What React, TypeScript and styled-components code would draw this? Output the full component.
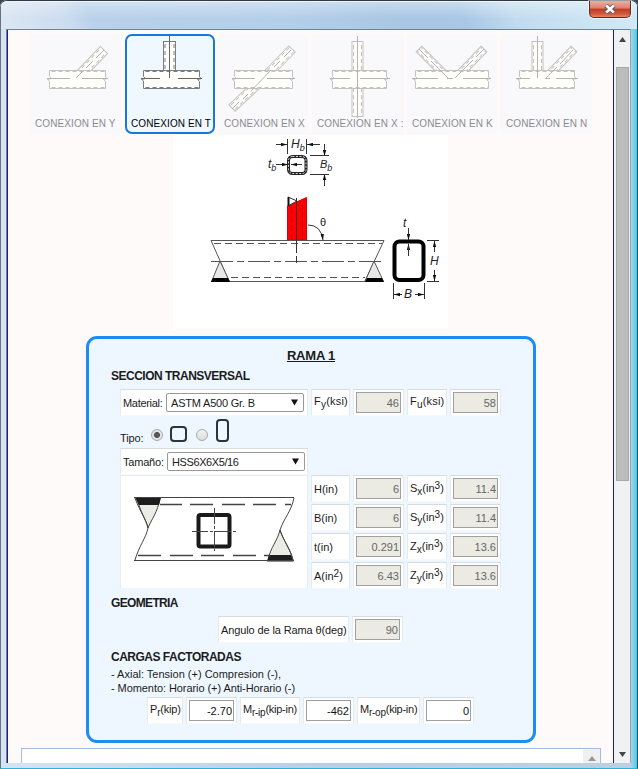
import React from "react";
import styled, { createGlobalStyle } from "styled-components";

const Global = createGlobalStyle`
  * { box-sizing: border-box; }
  body { margin: 0; overflow: hidden; font-family: "Liberation Sans", Arial, sans-serif; font-size: 11px; color: #1b1b1b; }
  svg { display: block; }
`;

const Window = styled.div`
  width: 638px;
  height: 769px;
  display: flex;
  flex-direction: column;
  border: 1px solid #4c5762;
  border-color: #2f3a44 #1d4f60 #2ab6d6 #66727c;
  border-radius: 7px 7px 0 0;
  background: linear-gradient(90deg, #d5e4f5 0, #b9cee8 50%, #bcd0e2 99%, #3fd0ec 100%);
  box-shadow: 0 0 0 8px #39454f;
`;

const TitleBar = styled.header`
  height: 28px;
  flex: none;
  display: flex;
  justify-content: flex-end;
  padding-right: 6px;
  border-radius: 6px 6px 0 0;
  border-top: 1px solid #eef6fc;
  background:
    linear-gradient(180deg, rgba(255,255,255,.35), rgba(255,255,255,0) 60%),
    linear-gradient(60deg, #dce7f4 0, #cbdcef 11%, #b9d1ea 15%, #b4cfea 45%, #a9c6e4 62%, #a9c8e6 72%, #c2dcef 80%, #d3ebf6 100%);
`;

const CloseButton = styled.button`
  width: 42px;
  height: 17px;
  margin-top: -1px;
  padding: 0;
  display: flex;
  align-items: center;
  justify-content: center;
  border: 1px solid #5b2a2a;
  border-top: 0;
  border-radius: 0 0 5px 5px;
  background: linear-gradient(180deg, #eab0a2 0, #dc8070 45%, #c03a22 50%, #d0583c 80%, #e08a68 100%);
  box-shadow: 0 0 0 1px rgba(255,255,255,.5);
`;

const Client = styled.div`
  height: 734px;
  flex: none;
  display: flex;
  margin: 0 6px 0 5px;
  border: 1px solid #6f8396;
  border-bottom: 0;
  border-right-color: #8fa6b8;
`;

const Page = styled.main`
  width: 607px;
  height: 733px;
  flex: none;
  overflow: hidden;
  display: flex;
  flex-direction: column;
  border-left: 1px solid #1c1c86;
  border-right: 1px solid #1c1c86;
  background: #fffafa;
`;

const ScrollTrack = styled.div`
  flex: 1;
  display: flex;
  flex-direction: column;
  align-items: center;
  justify-content: space-between;
  padding: 7px 0 6px;
  background: #f0f1f3;
`;

const Thumb = styled.div`
  width: 13px;
  height: 414px;
  margin: 25px 0 auto;
  background: #bcbcbc;
  border: 1px solid #a8a8a8;
`;

const Tabs = styled.nav`
  display: flex;
  height: 100px;
  flex: none;
  margin: 4px 0 0 22px;
  gap: 4px;
`;

const Tab = styled.div<{ $w: number; $active?: boolean }>`
  width: ${(p) => p.$w}px;
  height: 100px;
  flex: none;
  display: flex;
  flex-direction: column;
  overflow: hidden;
  border: ${(p) => (p.$active ? "2px solid #1478dc" : "0")};
  border-radius: ${(p) => (p.$active ? 7 : 0)}px;
  background: ${(p) => (p.$active ? "#f0f8ff" : "#f9f9fc")};
`;

const Caption = styled.span<{ $active?: boolean }>`
  font-size: 10px;
  line-height: 12px;
  letter-spacing: 0.1px;
  white-space: nowrap;
  padding-left: ${(p) => (p.$active ? 4 : 5)}px;
  padding-top: ${(p) => (p.$active ? 1 : 0)}px;
  color: ${(p) => (p.$active ? "#000" : "#8b8b8f")};
`;

const Figure = styled.div`
  width: 275px;
  height: 194px;
  flex: none;
  margin: 1px 0 0 165px;
  background: #fff;
`;

const Panel = styled.section`
  width: 450px;
  height: 407px;
  flex: none;
  margin: 7px 0 0 78px;
  border: 3px solid #1e8cf5;
  border-radius: 11px;
  background: #eef7ff;
  display: flex;
  flex-direction: column;
  padding: 9px 0 0 22px;
`;

const Title = styled.h1`
  margin: 0 0 0 -22px;
  width: 444px;
  text-align: center;
  font-size: 13px;
  line-height: 16px;
  letter-spacing: -0.2px;
  text-decoration: underline;
`;

const Heading = styled.h2<{ $top: number; $ls?: number }>`
  margin: ${(p) => p.$top}px 0 0;
  font-size: 12px;
  line-height: 14px;
  letter-spacing: ${(p) => p.$ls ?? -0.5}px;
`;

const Row = styled.div<{ $top?: number; $left?: number }>`
  display: flex;
  gap: 3px;
  margin: ${(p) => p.$top ?? 0}px 0 0 ${(p) => p.$left ?? 9}px;
`;

const Cell = styled.div<{ $w: number }>`
  width: ${(p) => p.$w}px;
  height: 27px;
  flex: none;
  display: flex;
  align-items: center;
  white-space: nowrap;
  padding-left: 2px;
  border: 1px solid #e6ebee;
  border-top-color: #d7dcdf;
  border-bottom-color: #f5f9fb;
  background: #fff;
`;

const Label = styled.span<{ $ls?: number; $lift?: number; $w?: number }>`
  line-height: 12px;
  width: ${(p) => (p.$w ? `${p.$w}px` : "auto")};
  letter-spacing: ${(p) => p.$ls ?? 0}px;
  padding-bottom: ${(p) => p.$lift ?? 0}px;
  sub, sup { font-size: 10px; line-height: 0; position: static; }
  sup { vertical-align: 3px; }
  sub { vertical-align: -3px; }
`;

const Field = styled.input<{ $editable?: boolean }>`
  width: 45px;
  height: 21px;
  margin: 0;
  padding: 1px 1px 0 0;
  text-align: right;
  font: 11px "Liberation Sans", Arial, sans-serif;
  border: 1px solid #a0a0a0;
  outline: none;
  background: ${(p) => (p.$editable ? "#fff" : "#ebebe4")};
  color: ${(p) => (p.$editable ? "#111" : "#666")};
`;

const Select = styled.div<{ $ls?: number }>`
  width: 138px;
  height: 19px;
  margin-left: 3px;
  padding: 0 5px 0 4px;
  display: flex;
  align-items: center;
  justify-content: space-between;
  letter-spacing: ${(p) => p.$ls ?? 0}px;
  border: 1px solid #999;
  border-radius: 2px;
  background: #fff;
`;

const TypeRow = styled.div`
  height: 32px;
  display: flex;
  align-items: flex-start;
  margin-left: 9px;
`;
const TypeLabel = styled.span`
  width: 31px;
  padding-top: 16px;
  line-height: 12px;
  letter-spacing: -0.1px;
`;
const Radio = styled.span<{ $on?: boolean }>`
  width: 12px;
  height: 12px;
  margin-top: 13px;
  border: 1px solid #a7a7a7;
  border-radius: 50%;
  background: ${(p) => (p.$on ? "radial-gradient(circle, #555 0 2.6px, #e4e4e4 3.4px)" : "linear-gradient(#f3f3f3, #dcdcdc)")};
`;
const Shape = styled.span<{ $w: number; $h: number; $top: number; $left: number; $right?: number }>`
  width: ${(p) => p.$w}px;
  height: ${(p) => p.$h}px;
  margin: ${(p) => p.$top}px ${(p) => p.$right ?? 0}px 0 ${(p) => p.$left}px;
  border: 2px solid #2c333c;
  border-radius: 4px;
`;

const Section = styled.div`
  display: grid;
  grid-template-columns: 188px 1fr;
  column-gap: 3px;
  margin: 0 0 0 9px;
`;
const SectionArt = styled.div`
  height: 113px;
  background: #fff;
  border: 1px solid #e9eef0;
  border-bottom: 0;
`;
const Values = styled.div`
  display: flex;
  flex-direction: column;
  gap: 2px;
`;
const Note = styled.p<{ $ls?: number }>`
  margin: 0;
  line-height: 14px;
  letter-spacing: ${(p) => p.$ls ?? 0}px;
  position: static;
  &:first-of-type { padding-top: 3px; line-height: 14px; }
`;

const Bottom = styled.div`
  width: 580px;
  height: 30px;
  flex: none;
  margin: 5px 0 0 13px;
  display: flex;
  justify-content: flex-end;
  border: 1px solid #a6bde3;
  background: #fff;
`;
const MiniScroll = styled.div`
  width: 17px;
  background: #f0f0f0;
  padding: 7px 0 0 5px;
`;

type TubeProps = { x1: number; y1: number; x2: number; y2: number; w: number };

const Tube = ({ x1, y1, x2, y2, w }: TubeProps) => {
  const len = Math.hypot(x2 - x1, y2 - y1);
  const a = (Math.atan2(y2 - y1, x2 - x1) * 180) / Math.PI;
  const h = w / 2;
  return (
    <g transform={`translate(${x1} ${y1}) rotate(${a})`}>
      <rect x={0} y={-h} width={len} height={w} fill="#fffefb" strokeWidth={1} />
      <path d={`M2 ${-h + 1.5}H${len}M2 ${h - 1.5}H${len}`} strokeDasharray="4 3" strokeWidth={1} fill="none" />
    </g>
  );
};

const Chord = ({ x1, x2 }: { x1: number; x2: number }) => (
  <g fill="none">
    <path
      d={`M${x1} 70.5H${x2}V77l2 1.5-4 1 2 2V88.5H${x1}V81l-2-1.5 4-1-2-2Z`}
      fill="#fffefb"
    />
    <path d={`M${x1 + 2} 71.500H${x2}M${x1 + 2} 87.500H${x2}`} strokeDasharray="4 3" />
  </g>
);

type Joint = {
  name: string; x: number; w: number; chord: [number, number];
  branches: TubeProps[]; axes: string; active?: boolean;
};

const joints: Joint[] = [
  { name: "CONEXION EN Y", x: 30, w: 91, chord: [49.5, 105.5],
    branches: [{ x1: 78, y1: 77, x2: 104, y2: 50, w: 10 }], axes: "M76 78L83 71M86 68L93 61M96 58L104 50M47 78.5H70M82 78.5H108" },
  { name: "CONEXION EN T", x: 125, w: 90, chord: [143.5, 199.5], active: true,
    branches: [{ x1: 169.5, y1: 78, x2: 169.5, y2: 41.5, w: 12 }], axes: "M169.5 36V78M141 78.5H160M178 78.5H202" },
  { name: "CONEXION EN X", x: 219, w: 89, chord: [234.5, 292.5],
    branches: [{ x1: 263, y1: 79, x2: 292, y2: 49, w: 9 }, { x1: 263, y1: 79, x2: 232, y2: 108, w: 9 }],
    axes: "M284 57L291 50M280 61L274 67M271 70L251 91M248 94L243 99M239 102L232 109M232 78.5H255M267 78.5H295" },
  { name: "CONEXION EN X :", x: 312, w: 91, chord: [332.5, 386.5],
    branches: [{ x1: 357.5, y1: 79, x2: 357.5, y2: 41.5, w: 11 }, { x1: 357.5, y1: 79, x2: 357.5, y2: 116.5, w: 11 }],
    axes: "M357.5 36V118M330 78.5H350M360 78.5H390" },
  { name: "CONEXION EN K", x: 407, w: 90, chord: [415.5, 488.5],
    branches: [{ x1: 447, y1: 77, x2: 419, y2: 49, w: 8 }, { x1: 457, y1: 77, x2: 484, y2: 49, w: 8 }],
    axes: "M448 78L431 61M428 58L419 49M455 78L473 60M476 57L484 49M412 78.5H438M447 78.5H453M463 78.5H491" },
  { name: "CONEXION EN N", x: 501, w: 91, chord: [519.5, 574.5],
    branches: [{ x1: 537.5, y1: 79, x2: 537.5, y2: 41.5, w: 11 }, { x1: 547, y1: 77, x2: 574, y2: 49, w: 8 }],
    axes: "M537.5 36V78M545 79L557 67M560 64L573 50M516 78.5H530M545 78.5H550M556 78.5H578" },
];

const JointTab = ({ j }: { j: Joint }) => {
  const inset = j.active ? 2 : 0;
  const h = j.active ? 81 : 84;
  return (
    <Tab $w={j.w} $active={j.active}>
      <svg width={j.w - inset * 2} height={h} viewBox={`${j.x + inset} ${34 + inset} ${j.w - inset * 2} ${h}`} stroke={j.active ? "#7c7c7c" : "#c2c2c0"} fill="none">
        {j.branches.map((b, i) => <Tube key={i} {...b} />)}
        <Chord x1={j.chord[0]} x2={j.chord[1]} />
        <path d={j.axes} stroke={j.active ? "#666" : "#b4b4b4"} />
      </svg>
      <Caption $active={j.active}>{j.name}</Caption>
    </Tab>
  );
};

const JointDiagram = () => (
  <svg width="275" height="194" viewBox="173 135 275 194" fill="none" stroke="#333" strokeWidth="1">
    <defs>
      <marker id="arrow" markerWidth="6" markerHeight="4" refX="6" refY="2" orient="auto" markerUnits="userSpaceOnUse">
        <path d="M0 0.300L6 2L0 3.700Z" fill="#111" stroke="none" />
      </marker>
    </defs>
    <g markerEnd="url(#arrow)">
      <path d="M276 144.5H287" /><path d="M320 144.5H307" />
      <path d="M276 164.5H288" /><path d="M302 164.5H291" />
      <path d="M324.500 144V156" /><path d="M324.500 186V174" />
      <path d="M408.500 228V240" /><path d="M408.500 256V244" />
      <path d="M434.500 252V241" /><path d="M434.500 270V281" />
      <path d="M402 294.500H394" /><path d="M415 294.500H424" />
      <path d="M308 225Q321 225 323 240" />
    </g>
    <path d="M287.500 139V154M306.500 139V154M310 155.500H329M310 174.500H329M427 240.500H439M427 281.500H439M393.500 283V299M424.500 283V299" />
    <rect x="288.500" y="156.500" width="17.500" height="17" rx="4" stroke="#222" strokeWidth="3" />
    <rect x="288.500" y="156.500" width="17.500" height="17" rx="4" stroke="#ddd" strokeWidth="1" strokeDasharray="2 1.500" />
    <path d="M287.500 206L306.500 197.500V240H287.500Z" fill="#f00" stroke="#d00" />
    <path d="M288 197L297 201L288 206" fill="#fff" />
    <path d="M288.500 197V206" stroke="#111" strokeWidth="2" />
    <path d="M291.500 207V240M302.500 203V240" stroke="#b80000" strokeDasharray="6 3" />
    <path d="M211 240.500H384L365 281.500H229L211 240.500Z" fill="#fff" stroke="none" />
    <path d="M211 240.500H384M211 281.500H384M211 240.500L229 281M384 240.500L365 281" stroke="#555" />
    <path d="M220 261L211.500 281.500H229.500ZM374 261L365 281.500H383.500Z" fill="#e8e8e4" stroke="#555" />
    <path d="M213 278H228L230 282H211ZM367 278H382L384 282H365Z" fill="#000" stroke="none" />
    <path d="M214 243.500H382M231 277.500H365" strokeDasharray="7 4" stroke="#555" />
    <path d="M211 261.500H385" strokeDasharray="22 4 7 4" stroke="#555" />
    <path d="M296.500 198V263" strokeDasharray="55 3" />
    <rect x="394.500" y="241.500" width="29" height="38.500" rx="5" stroke="#000" strokeWidth="4" />
    <path d="M408.500 246V256" />
    <g fill="#222" stroke="none" fontFamily="Liberation Sans, Arial, sans-serif" fontStyle="italic" fontSize="12">
      <text x="291" y="148">H<tspan fontSize="9" dy="3">b</tspan></text>
      <text x="268" y="168">t<tspan fontSize="9" dy="3">b</tspan></text>
      <text x="320" y="168" fontSize="11">B<tspan fontSize="9" dy="3">b</tspan></text>
      <text x="320" y="226" fontSize="11" fontStyle="normal">θ</text>
      <text x="403" y="227">t</text>
      <text x="430" y="265">H</text>
      <text x="404" y="298">B</text>
    </g>
  </svg>
);

const SectionDiagram = () => (
  <svg width="186" height="111" viewBox="121 476 186 111" fill="none" stroke="#444">
    <path d="M137 498C140 512 146 519 148 528C151 520 158 512 160 498ZM268 560C271 546 277 542 280 530C284 542 290 548 293 560Z" fill="#ecece6" />
    <path d="M135 497.500H161L159 505H139ZM269 555H291L293.500 561.500H267Z" fill="#1d1d1d" stroke="none" />
    <path d="M134 497.500H294M134 560.500H294M135 498C140 512 146 519 148 528C146 538 139 546 135 560M294 498C291 512 284 518 280 530C284 542 290 548 293 560" />
    <path d="M160 504.500H182M190 504.500H213M222 504.500H245M253 504.500H276M285 504.500H291M138 555.500H161M170 555.500H193M201 555.500H224M233 555.500H256M264 555.500H270" strokeWidth="1.500" />
    <rect x="198.500" y="515" width="31" height="31.500" rx="2" stroke="#1a1a1a" strokeWidth="4" />
    <path d="M192 531.500H236M214.500 508V551" strokeDasharray="16 2 3 2" />
  </svg>
);

const Value = ({ v, editable }: { v: string; editable?: boolean }) => (
  <Cell $w={51}><Field $editable={editable} readOnly value={v} /></Cell>
);

const rows: [React.ReactNode, string, React.ReactNode, string][] = [
  [<>H(in)</>, "6", <>S<sub>x</sub>(in<sup>3</sup>)</>, "11.4"],
  [<>B(in)</>, "6", <>S<sub>y</sub>(in<sup>3</sup>)</>, "11.4"],
  [<>t(in)</>, "0.291", <>Z<sub>x</sub>(in<sup>3</sup>)</>, "13.6"],
  [<>A(in<sup>2</sup>)</>, "6.43", <>Z<sub>y</sub>(in<sup>3</sup>)</>, "13.6"],
];

const Caret = () => <svg width="7" height="7" viewBox="0 0 8 7"><path d="M0 0H8L4 7Z" fill="#111" /></svg>;

export default function App() {
  return (
    <>
      <Global />
      <Window>
        <TitleBar>
          <CloseButton aria-label="Cerrar">
            <svg width="14" height="10" viewBox="0 0 14 10">
              <path d="M3 1.500L11 8.500M11 1.500L3 8.500" stroke="#555b66" strokeWidth="4.500" />
              <path d="M3.200 1.500L10.800 8.500M10.800 1.500L3.200 8.500" stroke="#fff" strokeWidth="2.600" />
            </svg>
          </CloseButton>
        </TitleBar>
        <Client>
          <Page>
            <Tabs>{joints.map((j) => <JointTab key={j.name} j={j} />)}</Tabs>
            <Figure><JointDiagram /></Figure>
            <Panel>
              <Title>RAMA 1</Title>
              <Heading $top={5}>SECCION TRANSVERSAL</Heading>
              <Row $top={6}>
                <Cell $w={188}><Label $w={40} $ls={-0.3}>Material:</Label><Select $ls={-0.2}>ASTM A500 Gr. B<Caret /></Select></Cell>
                <Cell $w={39}><Label $lift={3} $ls={0.2}>F<sub>y</sub>(ksi)</Label></Cell>
                <Value v="46" />
                <Cell $w={40}><Label $lift={3} $ls={0.2}>F<sub>u</sub>(ksi)</Label></Cell>
                <Value v="58" />
              </Row>
              <TypeRow>
                <TypeLabel>Tipo:</TypeLabel>
                <Radio $on />
                <Shape $w={17} $h={16} $top={10} $left={7} $right={9} />
                <Radio />
                <Shape $w={13} $h={23} $top={3} $left={8} />
              </TypeRow>
              <Row>
                <Cell $w={188}><Label $w={41} $ls={-0.2}>Tamaño:</Label><Select $ls={-0.4}>HSS6X6X5/16<Caret /></Select></Cell>
              </Row>
              <Section>
                <SectionArt><SectionDiagram /></SectionArt>
                <Values>
                  {rows.map(([a, av, b, bv], i) => (
                    <Row key={i} $left={0}>
                      <Cell $w={39}><Label>{a}</Label></Cell>
                      <Value v={av} />
                      <Cell $w={40}><Label $lift={2}>{b}</Label></Cell>
                      <Value v={bv} />
                    </Row>
                  ))}
                </Values>
              </Section>
              <Heading $top={7} $ls={-0.65}>GEOMETRIA</Heading>
              <Row $top={6} $left={107}>
                <Cell $w={131}><Label $ls={-0.12}>Angulo de la Rama θ(deg)</Label></Cell>
                <Value v="90" />
              </Row>
              <Heading $top={7}>CARGAS FACTORADAS</Heading>
              <Note>- Axial: Tension (+) Compresion (-),</Note>
              <Note $ls={-0.07}>- Momento: Horario (+) Anti-Horario (-)</Note>
              <Row $top={2} $left={36}>
                <Cell $w={36}><Label $lift={3} $ls={-0.2}>P<sub>r</sub>(kip)</Label></Cell>
                <Value v="-2.70" editable />
                <Cell $w={60}><Label $lift={3} $ls={-0.25}>M<sub>r-ip</sub>(kip-in)</Label></Cell>
                <Value v="-462" editable />
                <Cell $w={63}><Label $lift={3} $ls={-0.25}>M<sub>r-op</sub>(kip-in)</Label></Cell>
                <Value v="0" editable />
              </Row>
            </Panel>
            <Bottom>
              <MiniScroll><svg width="8" height="5"><path d="M0 5L4 0L8 5Z" fill="#999" /></svg></MiniScroll>
            </Bottom>
          </Page>
          <ScrollTrack>
            <svg width="7" height="5"><path d="M0 5L3.500 0L7 5Z" fill="#444" /></svg>
            <Thumb />
            <svg width="7" height="5"><path d="M0 0L3.500 5L7 0Z" fill="#444" /></svg>
          </ScrollTrack>
        </Client>
      </Window>
    </>
  );
}
